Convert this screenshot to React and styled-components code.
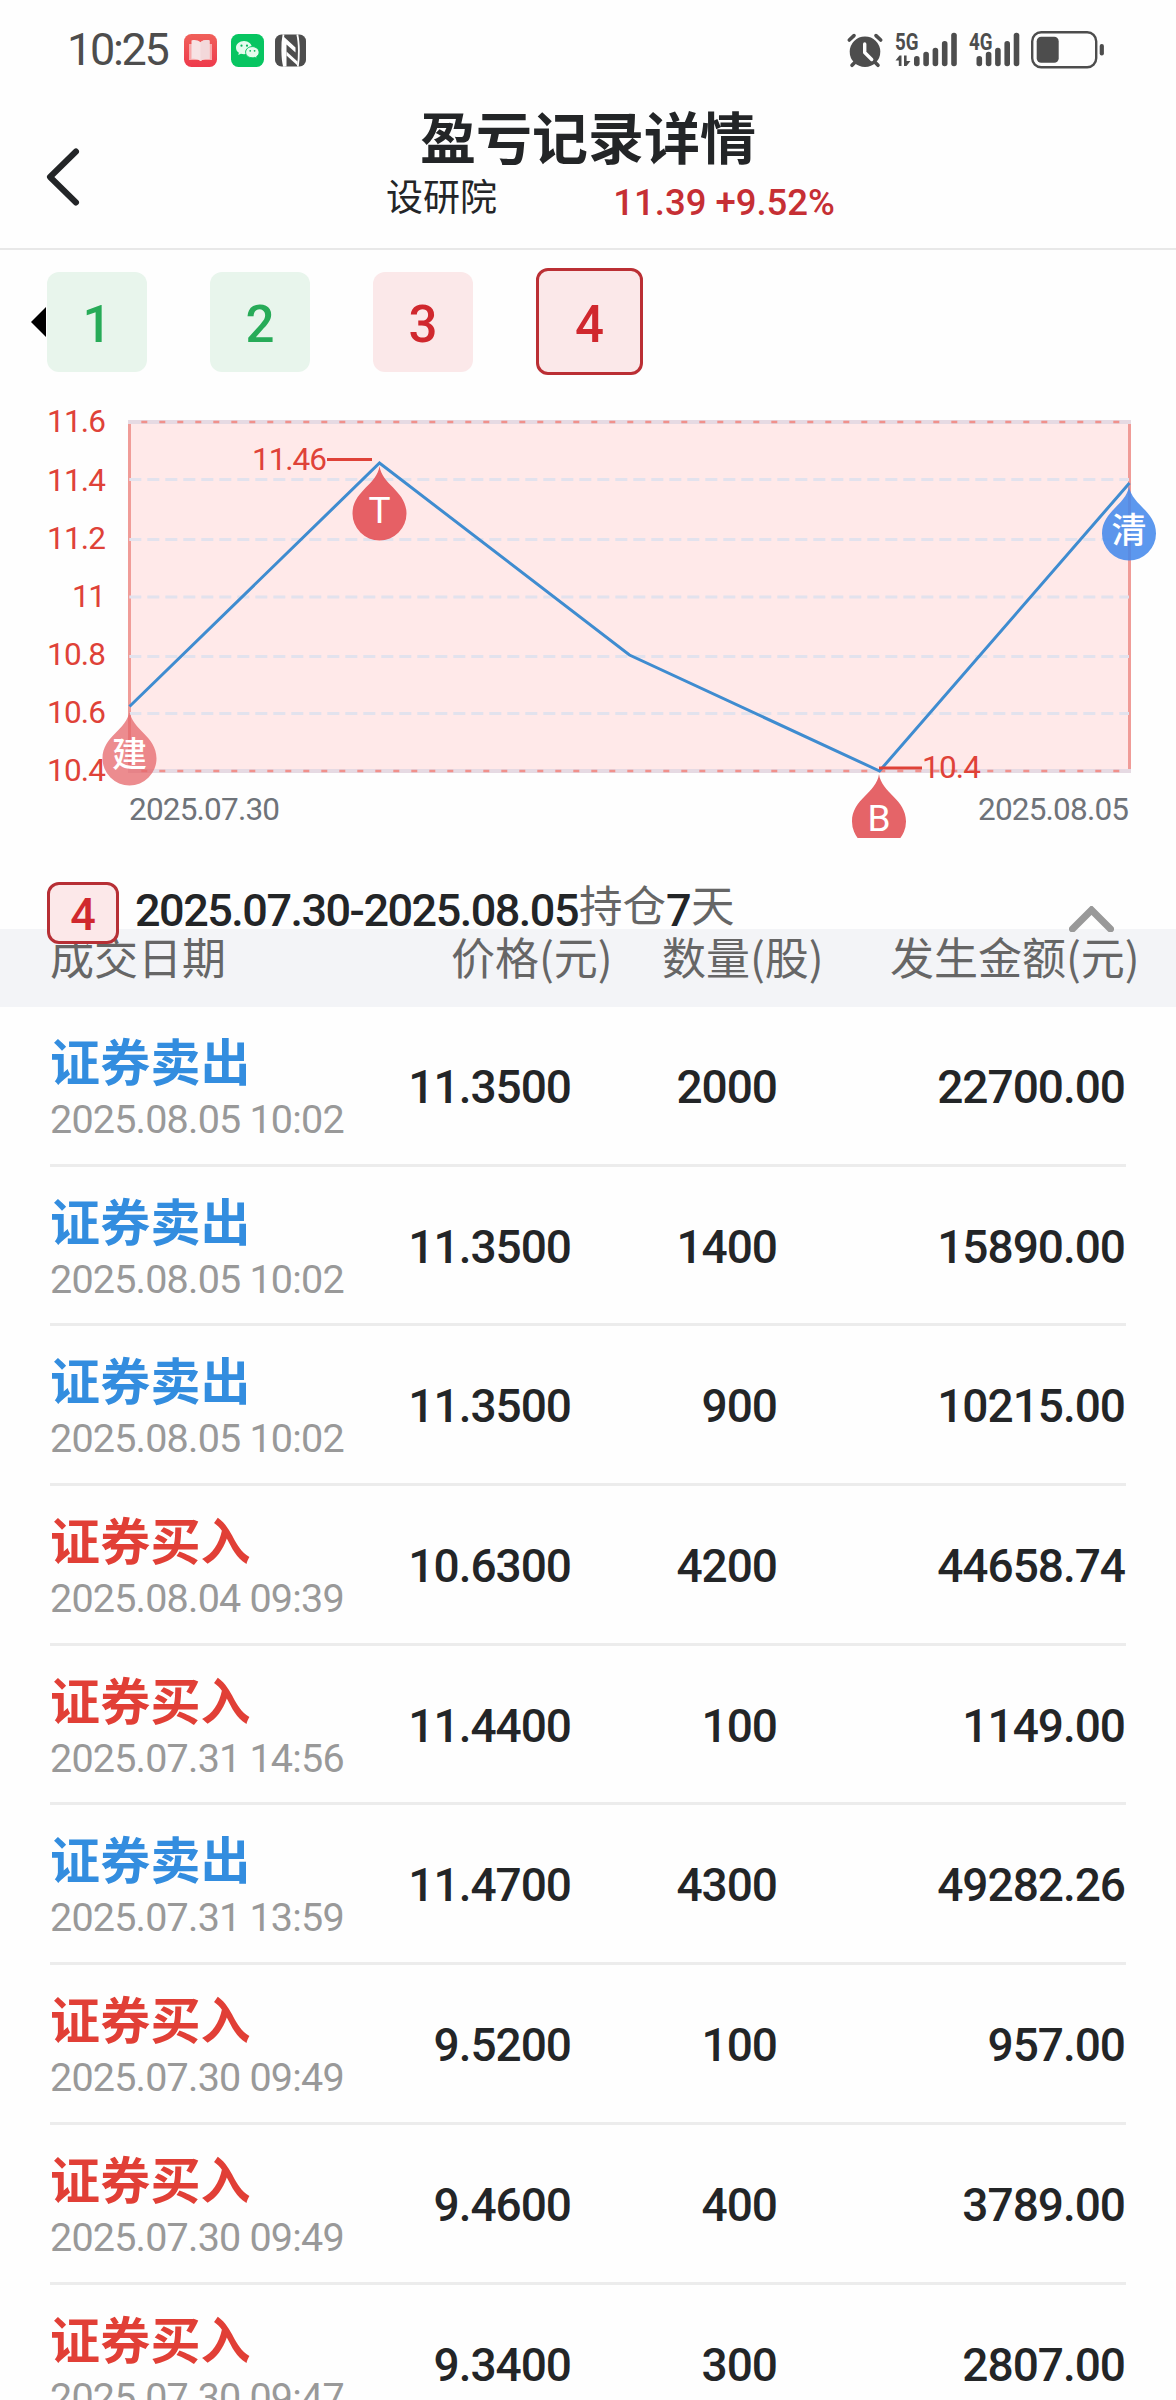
import React from "react";
import styled, { createGlobalStyle } from "styled-components";

const num = `Roboto, "Noto Sans CJK SC", sans-serif`;
const han = `"Noto Sans CJK SC", Roboto, sans-serif`;

const GlobalStyle = createGlobalStyle`
  * { box-sizing: border-box; }
  body { margin: 0; background: #fff; }
`;

const Screen = styled.main`
  width: 1176px;
  height: 2400px;
  overflow: hidden;
  background: #fefefe;
  color: #232527;
  font-family: ${num};
  display: flex;
  flex-direction: column;
`;

const StatusBar = styled.div`
  height: 100px;
  flex: none;
  padding: 0 71px 0 67px;
  display: flex;
  align-items: center;
  color: #4d4d4d;
`;

const Clock = styled.span`
  width: 117px;
  font-size: 45px;
  line-height: 50px;
  letter-spacing: -2.3px;
`;

const StatusIcons = styled.div`
  display: flex;
  align-items: center;
  gap: ${(p) => p.$gap}px;
  margin-left: ${(p) => p.$push || 0};
  svg { display: block; flex: none; overflow: visible; }
`;

const Header = styled.header`
  height: 150px;
  flex: none;
  border-bottom: 2px solid #e8e8e8;
  display: grid;
  grid-template-columns: 260px 1fr 260px;
`;

const BackButton = styled.button`
  border: 0;
  background: none;
  align-self: start;
  padding: 46px 0 0 44px;
  text-align: left;
  svg { display: block; }
`;

const Heading = styled.div`
  display: flex;
  flex-direction: column;
  align-items: center;
`;

const Title = styled.h1`
  margin: 5px 0 0;
  font: 700 56px/60px ${han};
`;

const Quote = styled.div`
  width: 450px;
  height: 50px;
  margin-top: 3px;
  display: flex;
  justify-content: space-between;
  white-space: pre;
`;

const Stock = styled.span`
  margin-left: 23px;
  font: 400 37px/54px ${han};
`;

const Change = styled.span`
  margin-right: -22px;
  font: 500 36.5px/70px ${num};
  color: #c62f34;
`;

const Tabs = styled.nav`
  height: 142px;
  flex: none;
  padding: 1px 0 0 31px;
  display: flex;
  align-items: center;
`;

const Arrow = styled.i`
  border: 15px solid transparent;
  border-right-color: #000;
  border-left: 0;
  margin-right: 1px;
`;

const Tab = styled.button`
  width: ${(p) => (p.$active ? 107 : 100)}px;
  height: ${(p) => (p.$active ? 107 : 100)}px;
  margin-right: ${(p) => p.$gap}px;
  padding: 6px 0 0;
  border: ${(p) => (p.$active ? "3px solid #bb2f34" : "0")};
  border-radius: 12px;
  background: ${(p) => (p.$up ? "#fbe8e9" : "#e8f5ec")};
  color: ${(p) => (p.$up ? "#d0282e" : "#27ab58")};
  font: 500 51px/${(p) => (p.$active ? 95 : 94)}px ${num};
`;

const Chart = styled.svg`
  display: block;
  flex: none;
  font-family: ${num};
`;

const Period = styled.section`
  height: 91px;
  flex: none;
  padding: 44px 62px 0 47px;
  display: flex;
  align-items: flex-start;
`;

const Badge = styled.span`
  width: 72px;
  height: 62px;
  flex: none;
  border: 3px solid #b72f35;
  border-radius: 12px;
  background: #fce8e9;
  color: #d0282e;
  font: 500 45px/59px ${num};
  text-align: center;
  position: relative;
  z-index: 1;
`;

const Range = styled.div`
  flex: 1;
  margin: 2px 0 0 16px;
  font: 500 45px/50px ${num};
  letter-spacing: -1.5px;
  white-space: nowrap;
  position: relative;
  z-index: 1;
  em {
    font: 400 43.5px/40px ${han};
    letter-spacing: 0;
    color: #666;
    vertical-align: 4px;
    margin-left: 1px;
  }
`;

const Collapse = styled.button`
  border: 0;
  padding: 0;
  margin-top: 24px;
  background: none;
  position: relative;
  z-index: 1;
  svg { display: block; }
`;

const TableHead = styled.div`
  height: 78px;
  flex: none;
  background: #f3f4f7;
  padding: 0 38px 0 50px;
  display: grid;
  grid-template-columns: 401px 211px 228px 1fr;
  font: 400 44px/54px ${han};
  color: #666;
  white-space: nowrap;
  span:last-child { text-align: right; }
`;

const Row = styled.div`
  height: 159.7px;
  flex: none;
  margin: 0 50px;
  padding-right: 1px;
  border-bottom: 3px solid #ececec;
  display: grid;
  grid-template-columns: 321px 200px 206px 1fr;
`;

const Deal = styled.div`
  padding-top: 25px;
  white-space: nowrap;
`;

const Side = styled.div`
  font: 700 50px/54px ${han};
  letter-spacing: 0.2px;
  color: ${(p) => (p.$buy ? "#e13f36" : "#338ddf")};
`;

const Time = styled.div`
  font-size: 39.5px;
  line-height: 46px;
  margin-top: 11px;
  letter-spacing: -0.8px;
  color: #999;
`;

const Value = styled.div`
  text-align: right;
  font-size: 46px;
  font-weight: 500;
  line-height: 160px;
  letter-spacing: -1px;
`;

const deals = [
  ["证券卖出", "2025.08.05 10:02", "11.3500", "2000", "22700.00"],
  ["证券卖出", "2025.08.05 10:02", "11.3500", "1400", "15890.00"],
  ["证券卖出", "2025.08.05 10:02", "11.3500", "900", "10215.00"],
  ["证券买入", "2025.08.04 09:39", "10.6300", "4200", "44658.74"],
  ["证券买入", "2025.07.31 14:56", "11.4400", "100", "1149.00"],
  ["证券卖出", "2025.07.31 13:59", "11.4700", "4300", "49282.26"],
  ["证券买入", "2025.07.30 09:49", "9.5200", "100", "957.00"],
  ["证券买入", "2025.07.30 09:49", "9.4600", "400", "3789.00"],
  ["证券买入", "2025.07.30 09:47", "9.3400", "300", "2807.00"],
];

const BookIcon = () => (
  <svg width="33" height="33" viewBox="0 0 33 33">
    <defs>
      <linearGradient id="book" x1="0" y1="0" x2="0" y2="1">
        <stop offset="0" stopColor="#f0605a" />
        <stop offset="1" stopColor="#ee3a4c" />
      </linearGradient>
    </defs>
    <rect width="33" height="33" rx="7.5" fill="url(#book)" />
    <path d="M5 10h23v16H18l-1.500 1-1.500-1H5z" fill="#f8a9ab" />
    <path d="M7.500 6.500c3-1 6.500-.5 9 1.800 2.500-2.300 6-2.800 9-1.800V25c-3-.5-6.500 0-9 2-2.500-2-6-2.500-9-2z" fill="#f7e3e4" />
    <path d="M16.500 8.300V27c2.500-2 6-2.500 9-2V6.500c-3-1-6.500-.5-9 1.800z" fill="#f3d8da" />
  </svg>
);

const WechatIcon = () => (
  <svg width="33" height="33" viewBox="0 0 33 33">
    <rect width="33" height="33" rx="7.500" fill="#07c561" />
    <path d="M13 7c-4.500 0-8 3-8 6.700 0 2.100 1.100 3.900 2.900 5.100L7.200 21l2.700-1.300c1 .3 2 .5 3.100.5 4.500 0 8-2.900 8-6.500S17.500 7 13 7z" fill="#e6fbee" />
    <path d="M21.300 12.600c-3.800 0-6.700 2.500-6.700 5.600s2.900 5.600 6.700 5.600c.9 0 1.700-.1 2.500-.4l2.300 1.200-.5-2c1.500-1 2.500-2.600 2.500-4.400 0-3.100-3-5.600-6.800-5.600z" fill="#e6fbee" stroke="#07c561" strokeWidth="1" />
    <circle cx="10.500" cy="11.700" r="1.100" fill="#07b85a" />
    <circle cx="16" cy="11.700" r="1.100" fill="#07b85a" />
    <circle cx="19.200" cy="16.800" r="0.900" fill="#07b85a" />
    <circle cx="23.600" cy="16.800" r="0.900" fill="#07b85a" />
  </svg>
);

const NfcSvg = styled.svg`
  margin-left: -3px;
`;

const NfcIcon = () => (
  <NfcSvg width="31" height="33" viewBox="0 0 31 33">
    <rect y="0.500" width="31" height="32" rx="6.500" fill="#4d4d4d" />
    <path d="M8.500 0.500C6.800 9 6.800 24 9 32.500M22.300 0.500C24.300 9 24.300 24 22.800 32.500" fill="none" stroke="#fefefe" strokeWidth="1.800" />
    <path d="M8 2L20.500 13.500V18.500L11.500 10.500V32.500H9C7.500 24 7.500 10 8 2z" fill="#fefefe" />
    <path d="M11.500 17.500L22.500 27.500V31.500L11.500 21.500z" fill="#fefefe" />
  </NfcSvg>
);

const AlarmIcon = () => (
  <svg width="36" height="35" viewBox="0 0 36 35">
    <g stroke="#4d4d4d" strokeWidth="3.600" strokeLinecap="round">
      <path d="M2.300 7L7 2.600M29 2.600L33.700 7M5 32.300l4-4M31 32.300l-4-4" />
    </g>
    <circle cx="18" cy="18.800" r="15.300" fill="#4d4d4d" />
    <path d="M17.700 11v8.500l7 7" fill="none" stroke="#fefefe" strokeWidth="3.400" strokeLinecap="round" strokeLinejoin="round" />
  </svg>
);

const barTops = [24, 19.7, 15.7, 9, 0.7];

const Signal = ({ label, first, arrows, width }) => (
  <svg width={width} height="36" viewBox={`0 0 ${width} 36`} fill="#4d4d4d">
    <text x="0" y="17.500" fontSize="23" fontWeight="700" fontFamily={num} textLength="23.500" lengthAdjust="spacingAndGlyphs">{label}</text>
    {arrows && (
      <path d="M0.500 28.500L4.500 23.500H6.500V34H3.800V28.500zM9 23.500h2.600v5.500h3.900L11.500 34H9z" />
    )}
    {barTops.map((top, i) => (
      <rect key={i} x={first + i * 9.3} y={top} width="5.600" height={34.300 - top} rx="2.700" />
    ))}
  </svg>
);

const BatteryIcon = () => (
  <svg width="74" height="38" viewBox="0 0 74 38">
    <rect x="1.200" y="1.200" width="64" height="35" rx="9" fill="none" stroke="#4d4d4d" strokeWidth="2.400" />
    <rect x="5.700" y="5.700" width="22" height="26" rx="4.500" fill="#4d4d4d" />
    <rect x="68.700" y="13" width="4.200" height="11.500" rx="2" fill="#4d4d4d" />
  </svg>
);

const gridY = [479.5, 539.5, 597, 656.5, 713.5];
const yLabels = [
  ["11.6", 432],
  ["11.4", 491],
  ["11.2", 549],
  ["11", 607],
  ["10.8", 665],
  ["10.6", 723],
  ["10.4", 781],
];

const Drop = ({ x, y, label, color, opacity, size = 35, dy = 60 }) => (
  <g>
    <path
      transform={`translate(${x} ${y})`}
      d="M0 0C2.500 19 27 25 27 47.500A27 27 0 0 1 -27 47.500C-27 25 -2.500 19 0 0z"
      fill={color}
      opacity={opacity}
    />
    <text x={x} y={y + dy} fill="#fff" fontSize={size} fontWeight={label > "z" ? 500 : 400} fontFamily={label > "z" ? han : num} textAnchor="middle">
      {label}
    </text>
  </g>
);

const PriceChart = () => (
  <Chart width="1176" height="446" viewBox="0 392 1176 446">
    <rect x="129" y="421" width="1000" height="350" fill="#ffe9e9" />
    <path d="M129.500 421V773M1129.500 421V773" stroke="#f09c98" strokeWidth="3" />
    {[422, 771].map((y) => (
      <g key={y}>
        <path d={`M128 ${y}H1131`} stroke="#e6dae3" strokeWidth="4" />
        <path d={`M141.300 ${y}H1126`} stroke="#f0918c" strokeWidth="2.400" strokeDasharray="6 12" />
      </g>
    ))}
    {gridY.map((y) => (
      <path key={y} d={`M129.300 ${y}H1129`} stroke="#e2e2ed" strokeWidth="3" strokeDasharray="12 6" />
    ))}
    <polyline points="129.500,706.500 379.500,463 629.500,655 879.500,771 1129.500,483" fill="none" stroke="#3f8cd0" strokeWidth="3" />
    <g fill="#df4238" fontSize="31.500">
      {yLabels.map(([t, y]) => (
        <text key={t} x="106" y={y} textAnchor="end" textLength={t === "11" ? 34 : 59} lengthAdjust="spacing">{t}</text>
      ))}
      <text x="252" y="470" textLength="75" lengthAdjust="spacing">11.46</text>
      <text x="922" y="778" textLength="59" lengthAdjust="spacing">10.4</text>
      <path d="M327 459.500H372M879 768H922" stroke="#df4238" strokeWidth="3" />
    </g>
    <g fill="#6f7379" fontSize="31.500">
      <text x="129" y="820" textLength="151" lengthAdjust="spacing">2025.07.30</text>
      <text x="978" y="820" textLength="151" lengthAdjust="spacing">2025.08.05</text>
    </g>
    <Drop x={129.500} y={711} label="建" color="#e5666a" opacity={0.75} dy={56} />
    <Drop x={379.500} y={466} label="T" color="#e55a5f" opacity={0.96} size={37} dy={57} />
    <Drop x={879} y={774} label="B" color="#e56468" opacity={1} size={37} dy={57} />
    <Drop x={1129} y={486} label="清" color="#4489ec" opacity={0.87} dy={57} />
  </Chart>
);

export default function App() {
  return (
    <Screen>
      <GlobalStyle />
      <StatusBar>
        <Clock>10:25</Clock>
        <StatusIcons $gap={14}>
          <BookIcon />
          <WechatIcon />
          <NfcIcon />
        </StatusIcons>
        <StatusIcons $gap={12} $push="auto">
          <AlarmIcon />
          <Signal label="5G" first={19} arrows width={62} />
          <Signal label="4G" first={7.500} width={50} />
          <BatteryIcon />
        </StatusIcons>
      </StatusBar>
      <Header>
        <BackButton aria-label="返回">
          <svg width="38" height="62" viewBox="0 0 38 62">
            <path d="M32 5.500L6 31l26 25.500" fill="none" stroke="#232527" strokeWidth="6" strokeLinecap="round" strokeLinejoin="round" />
          </svg>
        </BackButton>
        <Heading>
          <Title>盈亏记录详情</Title>
          <Quote>
            <Stock>设研院</Stock>
            <Change>11.39 +9.52%</Change>
          </Quote>
        </Heading>
      </Header>
      <Tabs>
        <Arrow />
        <Tab $gap={63}>1</Tab>
        <Tab $gap={63}>2</Tab>
        <Tab $up $gap={63}>3</Tab>
        <Tab $up $active $gap={0}>4</Tab>
      </Tabs>
      <PriceChart />
      <Period>
        <Badge>4</Badge>
        <Range>
          2025.07.30-2025.08.05<em>持仓</em>7<em>天</em>
        </Range>
        <Collapse aria-label="收起">
          <svg width="45" height="26" viewBox="0 0 45 26">
            <path d="M3.500 23L22.500 4l19 19" fill="none" stroke="#999" strokeWidth="7" strokeLinecap="round" />
          </svg>
        </Collapse>
      </Period>
      <TableHead>
        <span>成交日期</span>
        <span>价格(元)</span>
        <span>数量(股)</span>
        <span>发生金额(元)</span>
      </TableHead>
      {deals.map(([side, time, price, qty, amount], i) => (
        <Row key={i}>
          <Deal>
            <Side $buy={side === "证券买入"}>{side}</Side>
            <Time>{time}</Time>
          </Deal>
          <Value>{price}</Value>
          <Value>{qty}</Value>
          <Value>{amount}</Value>
        </Row>
      ))}
    </Screen>
  );
}
